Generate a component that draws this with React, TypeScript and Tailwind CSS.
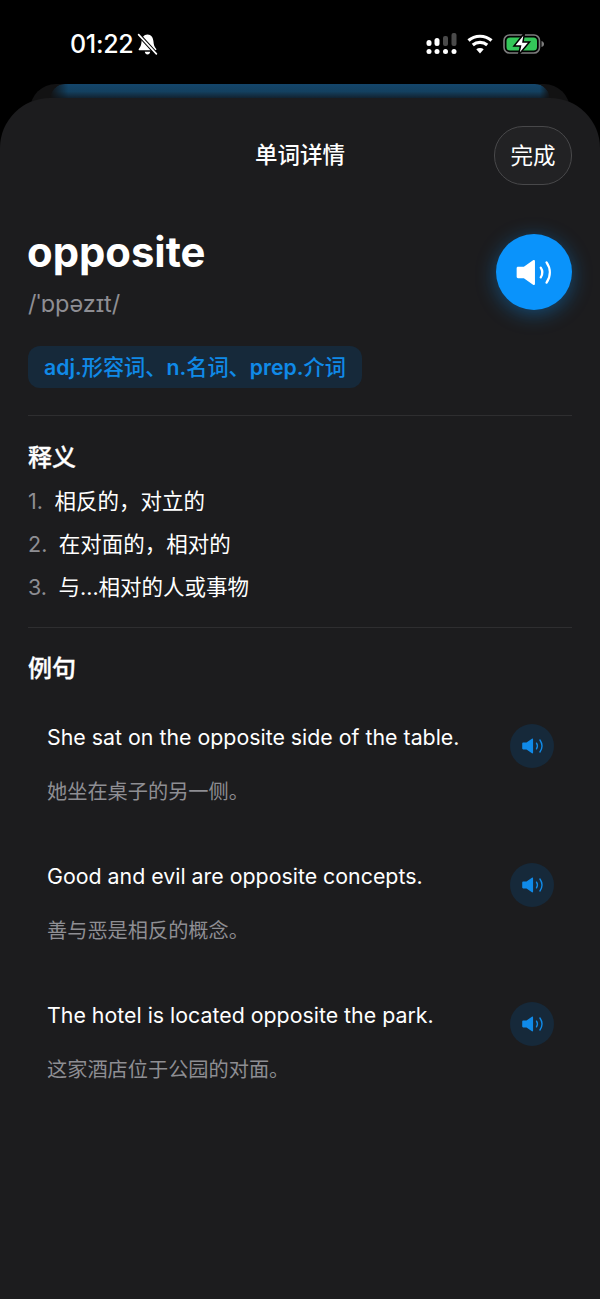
const font = { fontFamily: 'Inter, "Noto Sans CJK SC", sans-serif' };

function Speaker({ className }: { className: string }) {
  return (
    <svg viewBox="0 0 38 28" className={className} fill="none">
      <path d="M1 9.500C1 8.600 1.600 8 2.500 8H8.500L18 1.200C19 .600 20 1 20 2.300V25.700C20 27 19 27.400 18 26.800L8.500 20H2.500C1.600 20 1 19.400 1 18.500Z" fill="currentColor" />
      <path d="M26 9C28 12 28 16 26 19" stroke="currentColor" strokeWidth="2.400" strokeLinecap="round" />
      <path d="M32 3.500C36.500 10 36.500 18 32 24.500" stroke="currentColor" strokeWidth="2.400" strokeLinecap="round" />
    </svg>
  );
}

function StatusBar() {
  return (
    <div className="h-[84px] flex justify-between items-start pl-[70px] pr-[55px] pt-[29px] text-white">
      <div className="flex items-center gap-[4px]">
        <span className="text-[25px] leading-[30px] font-medium tracking-[-0.3px]">01:22</span>
        <svg viewBox="0 0 20 22" className="w-[21px] h-[23px]" fill="white">
          <path d="M10 1.500C6.400 1.500 4.600 4.400 4.300 8.200C4 11.600 3.400 13.400 1.800 15C1.200 15.700 1.600 16.500 2.400 16.500H17.600C18.400 16.500 18.800 15.700 18.200 15C16.600 13.400 16 11.600 15.700 8.200C15.400 4.400 13.600 1.500 10 1.500Z" />
          <path d="M7.400 18H12.600C12.400 19.600 11.400 20.500 10 20.500C8.600 20.500 7.600 19.600 7.400 18Z" />
          <path d="M1.500 1.500L18.500 20" stroke="black" strokeWidth="3.600" />
          <path d="M1.500 1.500L18.500 20" stroke="white" strokeWidth="1.600" strokeLinecap="round" />
        </svg>
      </div>
      <div className="flex items-center gap-[10px] h-[30px]">
        <svg viewBox="0 0 30 22" className="w-[31px] h-[22px]">
          <rect x="0" y="7" width="5" height="6" rx="2.500" fill="white" />
          <rect x="8" y="5" width="5" height="8" rx="2.500" fill="white" />
          <rect x="16.500" y="3" width="5" height="10" rx="2" fill="#4a4a4a" />
          <rect x="25" y="0" width="5" height="13" rx="2" fill="#4a4a4a" />
          <circle cx="2.500" cy="18.500" r="2.500" fill="white" />
          <circle cx="10.500" cy="18.500" r="2.500" fill="white" />
          <circle cx="19" cy="18.500" r="2.500" fill="white" />
          <circle cx="27.500" cy="18.500" r="2.500" fill="white" />
        </svg>
        <svg viewBox="0 0 26 20" className="w-[26px] h-[20px]" fill="none" stroke="white" strokeWidth="3.200">
          <path d="M1.500 6.500C7.800 .800 18.200 .800 24.500 6.500" />
          <path d="M5.800 11C9.800 7.600 16.200 7.600 20.200 11" />
          <path d="M13 19.500L9.300 15.300C11.300 13.700 14.700 13.700 16.700 15.300Z" fill="white" stroke="none" />
        </svg>
        <svg viewBox="0 0 42 24" className="w-[42px] h-[24px]">
          <rect x="1" y="3" width="35.500" height="18" rx="5.500" fill="none" stroke="#7d7d7d" strokeWidth="1.600" />
          <rect x="3.500" y="5.500" width="30.500" height="13" rx="3.500" fill="#34c759" />
          <path d="M38.500 9C40.200 9.500 41 10.500 41 12C41 13.500 40.200 14.500 38.500 15Z" fill="#7d7d7d" />
          <path d="M21.500 1L11 14H17.500L15.500 23L26.500 10H20Z" fill="white" stroke="black" strokeWidth="1.500" />
        </svg>
      </div>
    </div>
  );
}

const defs = ["相反的，对立的", "在对面的，相对的", "与...相对的人或事物"];
const examples = [
  ["She sat on the opposite side of the table.", "她坐在桌子的另一侧。"],
  ["Good and evil are opposite concepts.", "善与恶是相反的概念。"],
  ["The hotel is located opposite the park.", "这家酒店位于公园的对面。"],
];

export default function App() {
  return (
    <div className="w-[600px] h-[1299px] bg-black overflow-hidden" style={font}>
      <StatusBar />
      <div className="mx-[30px] h-[28px] rounded-t-[26px] bg-[#121213] overflow-hidden px-[20px]">
        <div className="h-[15px] rounded-t-[20px] bg-gradient-to-b from-[#14466b] via-[#13405f] to-[#101e2a] [mask-image:linear-gradient(to_right,transparent,black_18px,black_calc(100%-10px),transparent)]" />
      </div>
      <div className="relative -mt-[14px] h-[1201px] bg-[#1c1c1e] rounded-t-[50px] text-white">
        <div className="relative h-[115px] pt-[28px] pr-[28px] flex justify-end">
          <div className="absolute left-0 right-0 top-[41px] text-center text-[22.500px] leading-[32px] font-medium">单词详情</div>
          <div className="w-[78px] h-[59px] rounded-[29px] border border-[#48484a] bg-[#222224] flex items-center justify-center text-[22.500px] font-normal">完成</div>
        </div>
        <div className="flex justify-between pl-[28px] pr-[28px]">
          <div>
            <div className="text-[41.800px] leading-[48px] font-bold mt-[15px] -ml-px">opposite</div>
            <div className="text-[23.500px] leading-[30px] text-[#8e8e93] mt-[13px]">/ˈɒpəzɪt/</div>
            <div className="mt-[27px] inline-block h-[42px] px-[16px] rounded-[12px] bg-[#16293a] text-[#108ae8] text-[21.200px] leading-[42px] font-medium whitespace-nowrap">
              <span className="font-semibold">adj.</span>形容词、<span className="font-semibold">n.</span>名词、<span className="font-semibold">prep.</span>介词
            </div>
          </div>
          <div className="w-[76px] h-[76px] mt-[21px] rounded-full bg-[#0a93fb] flex items-center justify-center shadow-[0_4px_20px_rgba(10,147,251,0.4)] text-white">
            <Speaker className="w-[38px] h-[27px]" />
          </div>
        </div>
        <div className="mx-[28px] mt-[27px] h-px bg-[#2e2e30]" />
        <div className="mx-[28px] pt-[25px] pb-[24px] border-b border-[#2e2e30]">
          <div className="text-[24px] leading-[34px] font-medium [-webkit-text-stroke:0.35px_white]">释义</div>
          <div className="mt-[10px] flex flex-col gap-[11px]">
            {defs.map((d, i) => (
              <div key={d} className="flex text-[21.500px] leading-[32px] gap-[11.500px]">
                <span className="text-[#8e8e93]">{i + 1}.</span>
                <span>{d}</span>
              </div>
            ))}
          </div>
        </div>
        <div className="mx-[28px] pt-[24px]">
          <div className="text-[24px] leading-[34px] font-medium [-webkit-text-stroke:0.35px_white]">例句</div>
          <div className="mt-[35px] pl-[19px] pr-[18px] flex flex-col gap-[43px]">
            {examples.map(([en, zh]) => (
              <div key={en} className="flex justify-between h-[96px]">
                <div>
                  <div className="text-[21.350px] leading-[32px]">{en}</div>
                  <div className="mt-[23px] text-[20.200px] leading-[32px] text-[#8e8e93]">{zh}</div>
                </div>
                <div className="w-[44px] h-[44px] mt-[3px] rounded-full bg-[#16293a] text-[#108ae8] flex items-center justify-center">
                  <Speaker className="w-[23px] h-[16px]" />
                </div>
              </div>
            ))}
          </div>
        </div>
      </div>
    </div>
  );
}
